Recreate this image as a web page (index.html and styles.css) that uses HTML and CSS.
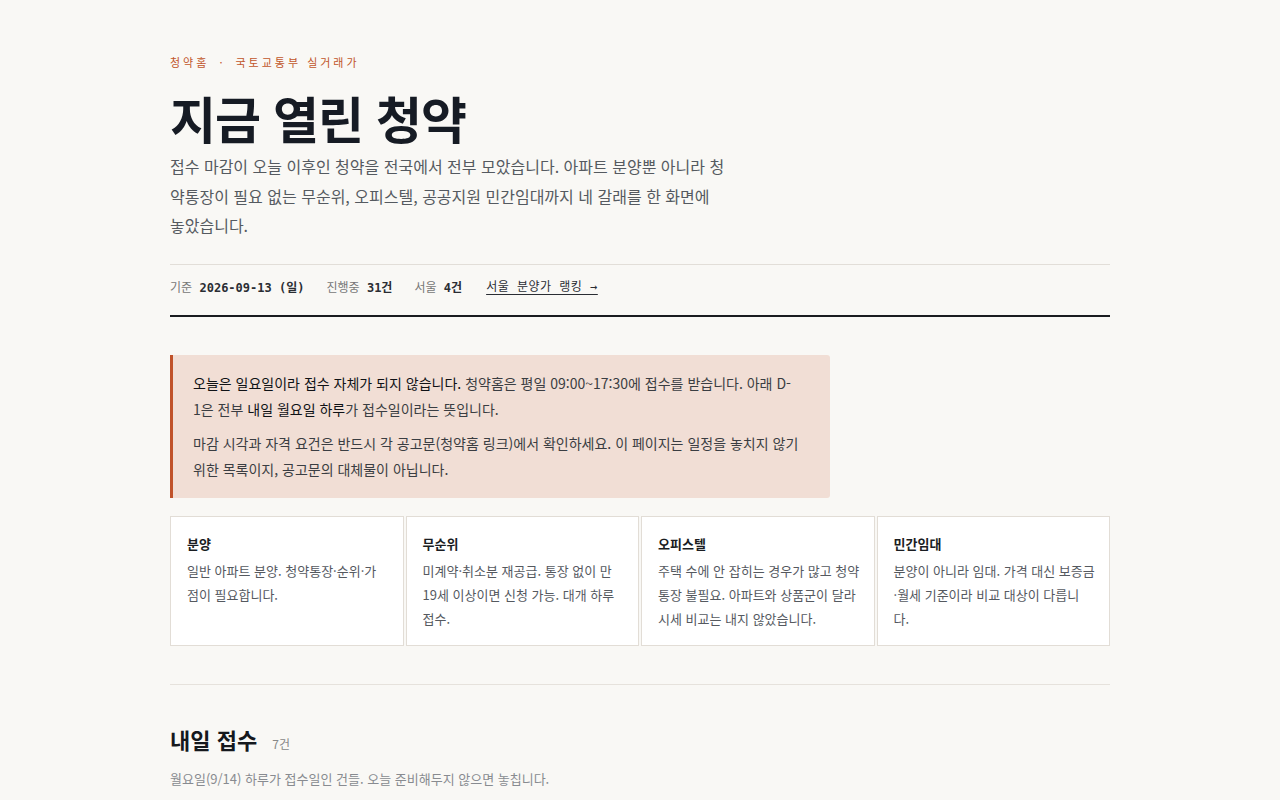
FILE: index.html
```html
<!DOCTYPE html>
<html lang="ko">
<head>
<meta charset="utf-8">
<title>지금 열린 청약</title>
<link rel="stylesheet" href="styles.css">
</head>
<body>
<main class="page">
  <header class="hero">
    <div class="eyebrow">청약홈<span class="dot">·</span>국토교통부 실거래가</div>
    <h1 class="title">지금 열린 청약</h1>
    <p class="lede">접수 마감이 오늘 이후인 청약을 전국에서 전부 모았습니다. 아파트 분양뿐 아니라 청<br>약통장이 필요 없는 무순위, 오피스텔, 공공지원 민간임대까지 네 갈래를 한 화면에<br>놓았습니다.</p>
  </header>
  <div class="meta">
    <span class="meta-item">기준 <b>2026-09-13 (일)</b></span>
    <span class="meta-item">진행중 <b>31건</b></span>
    <span class="meta-item">서울 <b>4건</b></span>
    <a class="meta-link" href="#">서울 분양가 랭킹 →</a>
  </div>

  <section class="notice">
    <p><span class="strong">오늘은 일요일이라 접수 자체가 되지 않습니다.</span> 청약홈은 평일 09:00~17:30에 접수를 받습니다. 아래 D-<br>1은 전부 <span class="strong">내일 월요일 하루</span>가 접수일이라는 뜻입니다.</p>
    <p>마감 시각과 자격 요건은 반드시 각 공고문(청약홈 링크)에서 확인하세요. 이 페이지는 일정을 놓치지 않기<br>위한 목록이지, 공고문의 대체물이 아닙니다.</p>
  </section>

  <section class="kinds">
    <div class="kind">
      <h3>분양</h3>
      <p>일반 아파트 분양. 청약통장·순위·가<br>점이 필요합니다.</p>
    </div>
    <div class="kind">
      <h3>무순위</h3>
      <p>미계약·취소분 재공급. 통장 없이 만<br>19세 이상이면 신청 가능. 대개 하루<br>접수.</p>
    </div>
    <div class="kind">
      <h3>오피스텔</h3>
      <p>주택 수에 안 잡히는 경우가 많고 청약<br>통장 불필요. 아파트와 상품군이 달라<br>시세 비교는 내지 않았습니다.</p>
    </div>
    <div class="kind">
      <h3>민간임대</h3>
      <p>분양이 아니라 임대. 가격 대신 보증금<br>·월세 기준이라 비교 대상이 다릅니<br>다.</p>
    </div>
  </section>

  <section class="group">
    <h2 class="group-title">내일 접수 <span class="count">7건</span></h2>
    <p class="group-sub">월요일(9/14) 하루가 접수일인 건들. 오늘 준비해두지 않으면 놓칩니다.</p>
  </section>
</main>
</body>
</html>
```
FILE: styles.css
```css
* { box-sizing: border-box; }
html, body { margin: 0; padding: 0; }
body {
  background: #f9f8f5;
  color: #1b1f26;
  font-family: "Noto Sans CJK KR", "Noto Sans", sans-serif;
}
.page {
  width: 940px;
  margin: 0 auto;
  padding-top: 52px;
}
.eyebrow {
  font-size: 11px;
  letter-spacing: 3px;
  color: #c1562a;
  line-height: 20px;
  white-space: nowrap;
}
.eyebrow .dot {
  display: inline-block;
  margin: 0 10px 0 10px;
}
.title {
  margin: 14px 0 0;
  font-size: 50px;
  font-weight: 700;
  line-height: 62px;
  letter-spacing: -1px;
  color: #161b24;
}
.lede {
  margin: 4px 0 0;
  max-width: 600px;
  font-size: 16px;
  line-height: 29.5px;
  color: #555a60;
  white-space: nowrap;
}
.meta {
  margin-top: 23px;
  border-top: 1px solid #e2ded8;
  border-bottom: 2px solid #1a1c20;
  padding: 12px 0 17px;
  display: flex;
  gap: 22px;
  font-size: 12px;
  line-height: 20px;
  color: #777;
}
.meta b {
  font-family: "DejaVu Sans Mono", "Noto Sans CJK KR", monospace;
  font-weight: 700;
  color: #2a2d33;
  margin-left: 4px;
}
.meta-link {
  font-family: "DejaVu Sans Mono", "Noto Sans CJK KR", monospace;
  color: #2a2d33;
  text-decoration: underline;
  text-underline-offset: 3px;
  letter-spacing: 0.5px;
  margin-left: 2px;
}
.notice {
  margin-top: 38px;
  width: 660px;
  background: #f1ded5;
  border-left: 3px solid #c0522a;
  border-radius: 0 3px 3px 0;
  padding: 15px 16px 16px 20px;
  font-size: 14px;
  line-height: 26px;
  color: #3a3d42;
  white-space: nowrap;
}
.notice p { margin: 0; }
.notice p + p { margin-top: 8px; }
.notice .strong { color: #0f1216; }
.kinds {
  margin-top: 18px;
  display: grid;
  grid-template-columns: repeat(4, 1fr);
  gap: 2px;
}
.kind {
  background: #fff;
  border: 1px solid #e2ddd6;
  padding: 16px 10px 14px 16px;
  min-height: 129px;
}
.kind h3 {
  margin: 0;
  font-size: 13px;
  font-weight: 700;
  line-height: 22px;
  color: #1a1d22;
}
.kind p {
  margin: 4px 0 0;
  font-size: 13px;
  line-height: 24px;
  color: #55595f;
  white-space: nowrap;
}
.group {
  margin-top: 38px;
  border-top: 1px solid #e6e2dc;
  padding-top: 38px;
}
.group-title {
  margin: 0;
  font-size: 22px;
  font-weight: 700;
  line-height: 32px;
  color: #15181d;
}
.group-title .count {
  font-size: 12px;
  font-weight: 400;
  color: #888;
  margin-left: 9px;
}
.group-sub {
  margin: 9px 0 0;
  font-size: 13px;
  line-height: 20px;
  color: #888b90;
}
```
